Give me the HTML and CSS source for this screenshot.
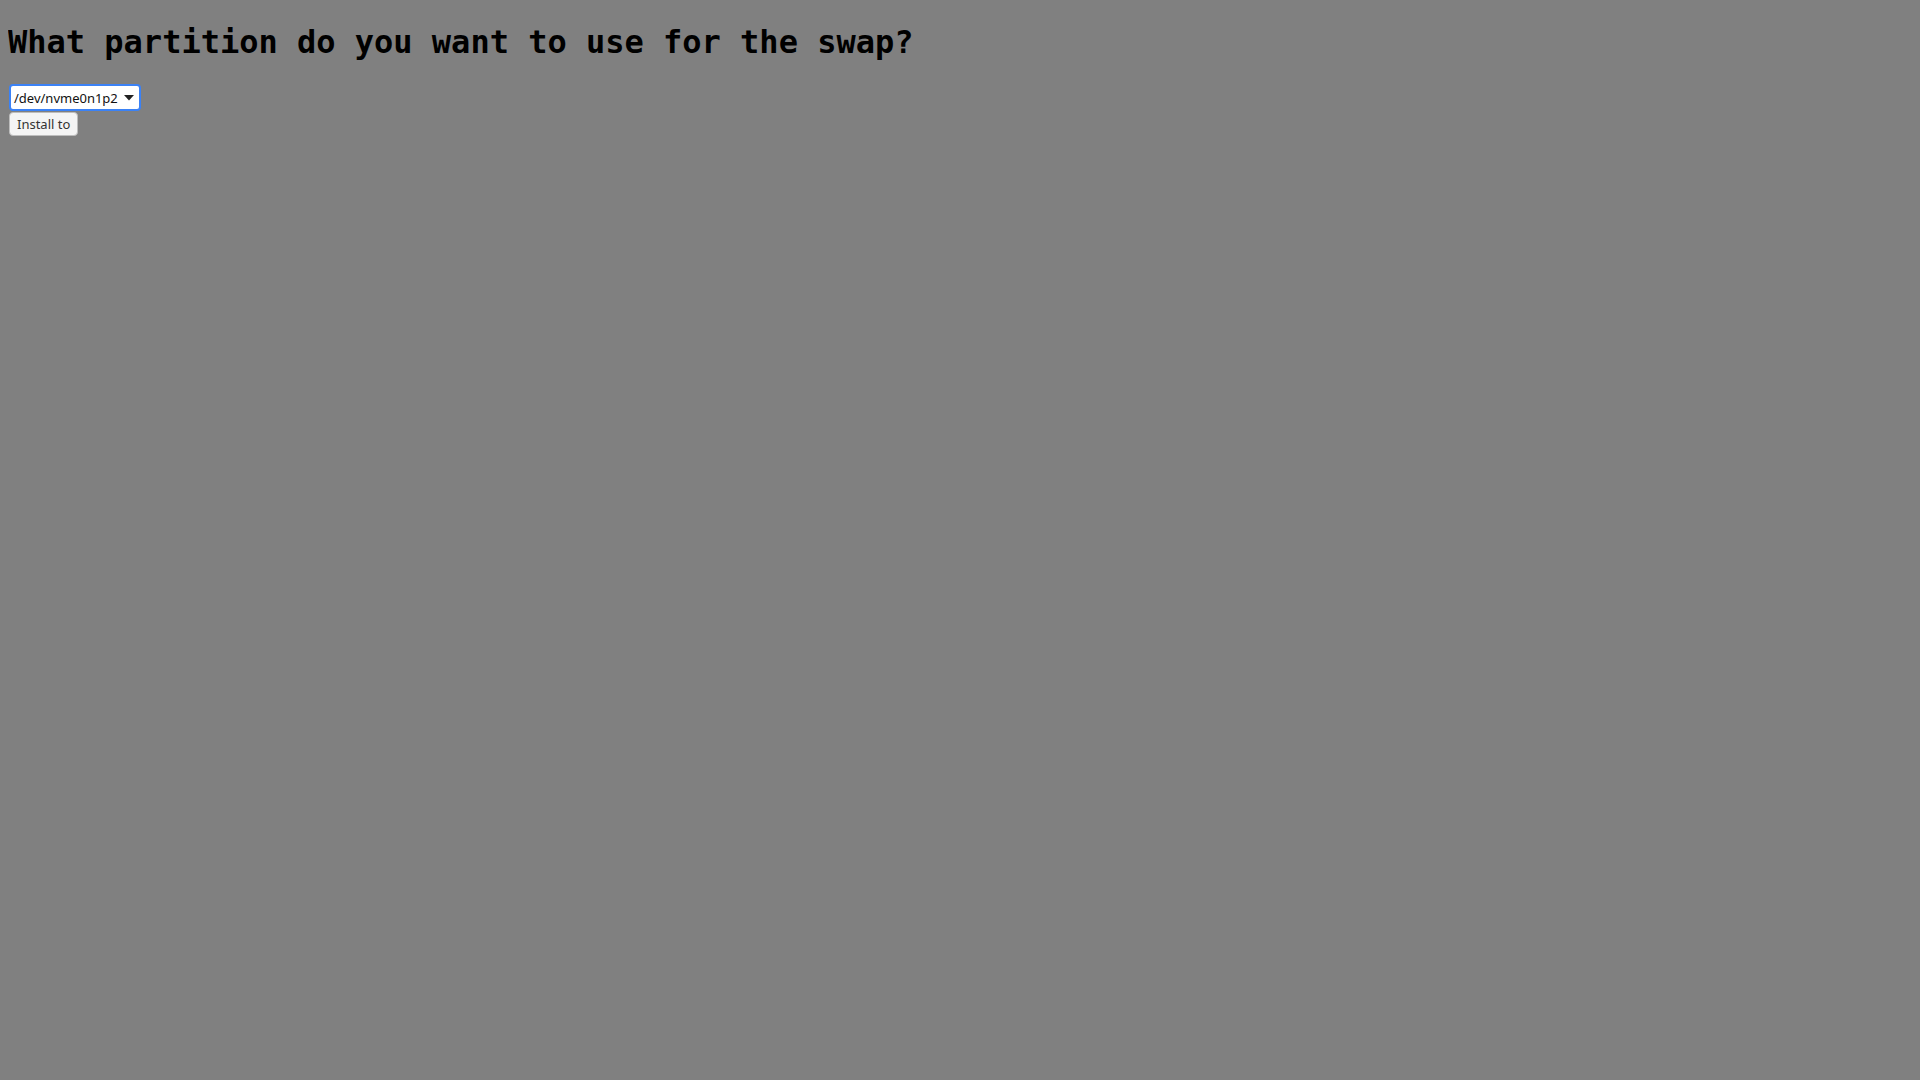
FILE: index.html
```html
<!DOCTYPE html>
<html>
<head>
<meta charset="utf-8">
<link rel="stylesheet" href="styles.css">
</head>
<body>
<h1 class="title">What partition do you want to use for the swap?</h1>
<div class="form">
  <div class="select">
    <span class="select-text">/dev/nvme0n1p2</span>
    <svg class="caret" width="10" height="6" viewBox="0 0 10 6"><path d="M0 0H10L5 5.5Z" fill="#222"/></svg>
  </div>
  <button class="btn">Install to</button>
</div>
</body>
</html>
```
FILE: styles.css
```css
html, body {
  background: #808080;
}
body {
  margin: 8px;
}
.title {
  font-family: "DejaVu Sans Mono", monospace;
  font-size: 32px;
  font-weight: bold;
  color: #000;
  margin: 15px 0 23px 0;
}
.form {
  display: flex;
  flex-direction: column;
  align-items: flex-start;
  gap: 1px;
}
.select {
  display: flex;
  align-items: center;
  gap: 6px;
  box-sizing: border-box;
  height: 27px;
  padding: 0 5px 0 3px;
  margin-left: 1px;
  background: #fff;
  border: 2px solid #3b82f6;
  border-radius: 4px;
  font-family: "Noto Sans", sans-serif;
  font-size: 13px;
  color: #111;
}
.caret {
  display: block;
}
.btn {
  margin-left: 1px;
  box-sizing: border-box;
  height: 24px;
  padding: 0 7px;
  background: #f4f4f4;
  border: 1px solid #bdbdbd;
  border-radius: 4px;
  font-family: "Noto Sans", sans-serif;
  font-size: 13px;
  color: #333;
}
```
